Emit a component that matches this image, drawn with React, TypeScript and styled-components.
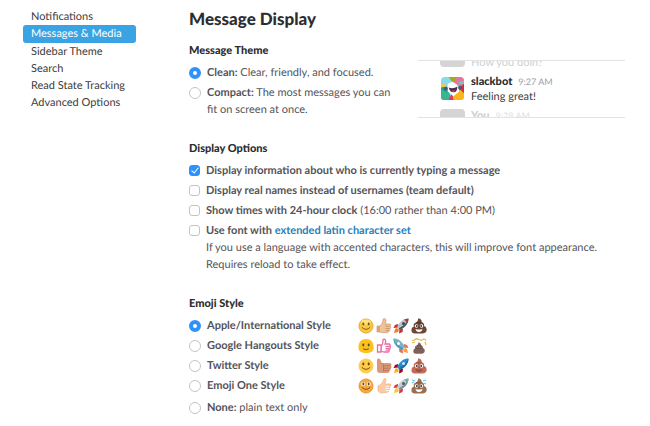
import React, { useState } from "react";
import styled, { createGlobalStyle, css } from "styled-components";

const GlobalStyle = createGlobalStyle`
  *, *::before, *::after { box-sizing: border-box; }
  body {
    margin: 0;
    background: #fff;
    color: #555459;
    font-family: Lato, "Liberation Sans", sans-serif;
    font-size: 11px;
    line-height: 17px;
    text-rendering: geometricPrecision;
  }
`;

const Page = styled.div`
  display: flex;
  align-items: flex-start;
  gap: 53px;
  padding: 8px 25px 0 23px;
`;

const Nav = styled.nav`
  display: flex;
  flex-direction: column;
  flex: 0 0 113px;
`;

const NavLink = styled.a<{ $active?: boolean }>`
  padding: 0 8px;
  border-radius: 3px;
  line-height: ${(p) => (p.$active ? 18 : 17)}px;
  color: ${(p) => (p.$active ? "#fff" : "#3d3c40")};
  background: ${(p) => (p.$active ? "#3aa3e3" : "transparent")};
  text-decoration: none;
`;

const Main = styled.main`
  flex: 1;
  min-width: 0;
`;

const Title = styled.h1`
  margin: 0 0 12px;
  font-size: 17px;
  line-height: 22px;
  font-weight: 900;
  color: #2c2d30;
`;

const Section = styled.section`
  margin-bottom: 22px;
  &:last-child {
    margin-bottom: 0;
  }
`;

const SectionTitle = styled.h2`
  margin: 0 0 5px;
  font-size: 11px;
  line-height: 17px;
  font-weight: 900;
  color: #2c2d30;
`;

const ThemeRow = styled.div`
  display: flex;
  gap: 20px;
`;

const ThemeChoices = styled.div`
  flex: 0 0 209px;
`;

const Options = styled.div`
  display: flex;
  flex-direction: column;
  gap: 3px;
`;

const Option = styled.label`
  display: flex;
  align-items: flex-start;
  gap: 6px;
`;

const control = css`
  appearance: none;
  flex: none;
  margin: 3px 0 0;
  border: 1px solid #c4c4c6;
  background: #fff;
`;

const Radio = styled.input.attrs({ type: "radio" })`
  ${control}
  width: 12px;
  height: 12px;
  border-radius: 50%;
  &:checked {
    border: 4px solid #2f91fb;
  }
`;

const Checkbox = styled.input.attrs({ type: "checkbox" })`
  ${control}
  display: grid;
  place-items: center;
  width: 11px;
  height: 11px;
  border-radius: 3px;
  &:checked {
    border-color: #2f91fb;
    background: #2f91fb;
  }
  &:checked::before {
    content: "";
    width: 4px;
    height: 7px;
    margin-bottom: 2px;
    border: solid #fff;
    border-width: 0 1px 1px 0;
    transform: rotate(40deg);
  }
`;

const Label = styled.span`
  min-width: 0;
`;

const Link = styled.a`
  color: #2a80b9;
  text-decoration: none;
`;

const PreviewColumn = styled.div`
  display: flex;
  flex: 1;
  min-width: 0;
  padding-top: 18px;
`;

const Preview = styled.div`
  flex: 1;
  min-width: 0;
  height: 58px;
  display: flex;
  flex-direction: column;
  justify-content: center;
  gap: 3px;
  overflow: hidden;
  border: solid #e3e3e4;
  border-width: 1px 0;
`;

const Message = styled.div<{ $faded?: boolean }>`
  display: flex;
  gap: 6px;
  flex: none;
  height: 31px;
  padding: 0 22px;
  line-height: 15px;
  color: ${(p) => (p.$faded ? "#cfcfd0" : "#3d3c40")};
`;

const MessageText = styled.div`
  white-space: nowrap;
`;

const Author = styled.strong<{ $faded?: boolean }>`
  font-weight: 900;
  color: ${(p) => (p.$faded ? "#cfcfd0" : "#2c2d30")};
`;

const Time = styled.time<{ $faded?: boolean }>`
  margin-left: 6px;
  font-size: 9px;
  color: ${(p) => (p.$faded ? "#e0e0e1" : "#9e9ea6")};
`;

const BlankAvatar = styled.span`
  width: 25px;
  height: 26px;
  margin-top: 1px;
  border-radius: 4px;
  background: #d5d5d6;
`;

const BotAvatar = styled.svg`
  width: 25px;
  height: 25px;
  padding: 1px;
  margin-top: 2px;
`;

const EmojiRow = styled.div<{ $spaced?: boolean }>`
  display: grid;
  grid-template-columns: 169px 70px;
  align-items: center;
  margin-top: ${(p) => (p.$spaced ? 2 : 0)}px;
`;

const EmojiSet = styled.div`
  display: grid;
  grid-template-columns: repeat(4, 1fr);
  svg {
    width: 16px;
    height: 16px;
    display: block;
  }
`;

function Slackbot() {
  return (
    <BotAvatar viewBox="0 0 24 24" aria-label="slackbot">
      <clipPath id="bot"><rect width="24" height="24" rx="4" /></clipPath>
      <g clipPath="url(#bot)">
        <path fill="#86dce8" d="M0 0h24v24H0z" />
        <path fill="#a2ad18" d="M8 0h9l-4 7z" />
        <path fill="#e6759d" d="M17 0h7v10l-8-1-3-3z" />
        <path fill="#d62a51" d="M18 12l6-5v12z" />
        <path fill="#16a58b" d="M0 8l9 6-2 10H0z" />
        <path fill="#39b592" d="M0 24V13l9 4 1 7z" />
        <path fill="#e93468" d="M8 24l3-7 5 4-1 3z" />
        <path fill="#fbb51a" d="M12 19l8-6 4 4v7H13z" />
        <path fill="#fff" d="M7 7l5-2 5 3 2 7-6 5-6-5z" />
        <path fill="#47304b" d="M8 11c3 1 6 1 9-1 0 4-1 6-4 6s-4-2-5-5z" />
        <path fill="#e0476d" d="M11 14h4l-2 2z" />
        <circle cx="5" cy="12" r="2" fill="#555374" />
        <circle cx="20" cy="11" r="2" fill="#555374" />
        <path fill="#f4c747" d="M0 7l6 1-1 2-5 1z" />
        <path fill="#70c6ba" d="M18 5l6-1v3l-5 1z" />
      </g>
    </BotAvatar>
  );
}

type EmojiStyle = "apple" | "google" | "twitter" | "one";

const faces = {
  apple: { fill: "#fbc940", edge: "#e7a733", ink: "#79501f", y: 6 },
  google: { fill: "#fcc21b", edge: "#fcc21b", ink: "#5b4a35", y: 7 },
  twitter: { fill: "#ffcc4d", edge: "#ffcc4d", ink: "#664500", y: 6 },
  one: { fill: "#f8a93b", edge: "#e99731", ink: "#65462c", y: 6 },
};

function Face({ kind }: { kind: EmojiStyle }) {
  const f = faces[kind];
  return (
    <svg viewBox="0 0 16 16">
      {kind === "google" ? (
        <path fill={f.fill} d="M8 1c5 0 7 3 7.500 7 .5 5-2 7-7.500 7S0 13 .5 8C1 4 3 1 8 1z" />
      ) : (
        <circle cx="8" cy="8" r="7" fill={f.fill} stroke={f.edge} />
      )}
      {kind === "apple" && <ellipse cx="8" cy="4" rx="5" ry="2.500" fill="#ffe477" />}
      {kind === "one" && (
        <g fill="#fff">
          <circle cx="5.200" cy="6" r="2" />
          <circle cx="10.800" cy="6" r="2" />
        </g>
      )}
      <g fill={f.ink}>
        <ellipse cx="5.300" cy={f.y} rx="1" ry="1.400" />
        <ellipse cx="10.700" cy={f.y} rx="1" ry="1.400" />
      </g>
      <path
        d={kind === "google" ? "M5.500 11q2.500 1.500 5 0" : "M4 9.500q4 4 8 0"}
        fill="none" stroke={f.ink} strokeWidth=".9" strokeLinecap="round"
      />
    </svg>
  );
}

function Thumb({ kind }: { kind: EmojiStyle }) {
  if (kind === "google")
    return (
      <svg viewBox="0 0 16 16" fill="#fff" stroke="#ed6ca5" strokeWidth="1.300">
        <path d="M5 8c2-1 2-3 2-6 0-1 2-1 2.500 0 .5 1.500 0 3-.5 4h4c1.500 0 1.500 2 .3 2 1.500.3 1.500 2 0 2 1 .5.8 2-.4 2 .6 1 0 2-1 2H8c-1 0-2-.5-3-1z" />
        <path d="M1.500 7H5v7H1.500zM9.500 8.300h4M9.500 10.300h3.500M9.500 12.200h3" />
      </svg>
    );
  if (kind === "twitter")
    return (
      <svg viewBox="0 0 16 16">
        <path fill="#d99a7c" d="M1 2c0-2 3-2 3.500 0L6 5h7.500c2 0 2.500 2 1.500 2.700 1 1 .5 2.300-.5 2.600.5 1.200 0 2.200-1 2.200 0 1.800-1 2.500-2 2.500H4c-2 0-3-1-3-3z" />
        <path fill="none" stroke="#b96c54" strokeWidth=".8" d="M7.500 7.700h7M7.500 10.200h7M7.500 12.600h6M6 5l1.500 2v6.500" />
      </svg>
    );
  const one = kind === "one";
  return (
    <svg viewBox="0 0 16 16">
      <path
        fill={one ? "#fbcba3" : "#edc39a"} stroke={one ? "#eeb184" : "#c99668"} strokeWidth=".7"
        d={one
          ? "M2 8c3-1 5-4 6-7 1-1 2 0 2 1 0 2-1 3-1.500 4H14c1.500 0 1.500 2 0 2h-1c1.500.5 1.500 2 0 2.200 1 .6.5 2-.7 2 .5 1 0 2-1 2L6 15c-2 0-4-1-4-3z"
          : "M1 8h3c2-2 3-4 3-6 0-2 3-2 3 1 0 1-.5 2-1 3h4.500c1.500 0 1.500 2 .5 2.300 1 .6 1 2-.2 2.300.6 1 .2 2-.8 2 .2 1-.5 2-1.500 2H6L4 14H1z"}
      />
      <path fill="none" stroke={one ? "#fff" : "#c18c60"} strokeWidth=".8" d="M9.500 8.300h4M9.500 10.500h4M9.500 12.600H13" />
      {!one && <path fill="#d6a577" d="M1 8h3v6H1z" />}
    </svg>
  );
}

const rockets = {
  apple: { body: "#b9c0c6", shade: "#4c5560", fin: "#c92d2e", window: "#384957", flame: "#f47b31" },
  google: { body: "#74b5cc", shade: "#4e9bb7", fin: "#e96a55", window: "#fff", flame: "#ff9d3b" },
  twitter: { body: "#2e8ad0", shade: "#1c6bae", fin: "#a0041e", window: "#cbe8fa", flame: "#ffac33" },
  one: { body: "#c3ccd2", shade: "#7d8a94", fin: "#d93849", window: "#4a606d", flame: "#ffc13b" },
};

function Rocket({ kind }: { kind: EmojiStyle }) {
  const r = rockets[kind];
  return (
    <svg viewBox="0 0 16 16">
      <g transform={kind === "google" ? "matrix(-1 0 0 1 16 0)" : undefined}>
        <path fill={r.flame} d="M1 15l1-4 2-1 2 2-1 2z" />
        <path fill={r.fin} d="M5 6L2 7 .5 10 5 9.500zM10 11l-.5 3L6 15.500 6.500 11z" />
        <path fill={r.body} d="M15.500.5C11 .5 7 3 4 9l3 3c6-3 8.500-7 8.500-11.500z" />
        <path fill={r.shade} d="M15.500.5C14 5 10 8 5.500 10.500L7 12c6-3 8.500-7 8.500-11.500z" />
        {kind === "apple" && <path fill={r.fin} d="M15.500.5l-4.500 1 3.500 3.500z" />}
        {kind === "one" && <path fill="#67b98b" d="M15.500.5l-4.500 1 3.500 3.500z" />}
        <circle cx="10.500" cy="5.500" r="1.500" fill={r.window} />
      </g>
    </svg>
  );
}

const piles = {
  apple: { fill: "#6d4634", shade: "#4b2b20" },
  google: { fill: "#80605a", shade: "#5d4540" },
  twitter: { fill: "#be6c59", shade: "#994b3e" },
  one: { fill: "#997052", shade: "#76513a" },
};

function Pile({ kind }: { kind: EmojiStyle }) {
  const p = piles[kind];
  const google = kind === "google";
  return (
    <svg viewBox="0 0 16 16">
      <g transform={google ? "translate(2 4) scale(.75)" : undefined}>
        <path fill={p.fill} d="M7 .5c3 0 4 2 3.500 3.500C13 4.500 13.500 6.500 13 8c2.500.5 3 3 2.500 5-.5 1.500-2 2.500-4 2.500H4c-2.500 0-4-1.500-3.500-4C.8 9.500 1.500 9 3 8.500 2 6.500 3 5 5 4.500 6 4 7.500 2 7 .5z" />
        <path fill="none" stroke={p.shade} strokeWidth=".8" d="M5 4.500q3 1 5.500-.5M3 8.500q5 1.500 10-.5" />
      </g>
      {google ? (
        <path fill="none" stroke="#efb84b" strokeWidth="1.300" d="M1 2q2 1 3-.5t4 0 4 0 3 1M1 5l3-1M14 4l1 3" />
      ) : (
        <g>
          <circle cx="5.500" cy="8" r="1.800" fill="#fff" />
          <circle cx="10.500" cy="8" r="1.800" fill="#fff" />
          <circle cx="5.800" cy="8" r=".9" fill="#33251f" />
          <circle cx="10.200" cy="8" r=".9" fill="#33251f" />
          <path fill={kind === "twitter" ? p.shade : "#fff"} d="M4.500 11q3.500 1 7 0-.5 3-3.500 3t-3.500-3z" />
        </g>
      )}
      {kind === "one" && <path stroke="#6fc7e9" strokeWidth="1.200" d="M1 5l2-1M1 2l3 1M12 3l3-1M13 5l2 1" />}
    </svg>
  );
}

const navItems = ["Notifications", "Messages & Media", "Sidebar Theme", "Search", "Read State Tracking", "Advanced Options"];

const emojiOptions: { kind: EmojiStyle; label: string }[] = [
  { kind: "apple", label: "Apple/International Style" },
  { kind: "google", label: "Google Hangouts Style" },
  { kind: "twitter", label: "Twitter Style" },
  { kind: "one", label: "Emoji One Style" },
];

export default function App() {
  const [theme, setTheme] = useState("clean");
  const [emoji, setEmoji] = useState("apple");

  return (
    <>
      <GlobalStyle />
      <Page>
        <Nav>
          {navItems.map((item, i) => (
            <NavLink key={item} href="#" $active={i === 1}>{item}</NavLink>
          ))}
        </Nav>
        <Main>
          <Title>Message Display</Title>
          <Section>
            <ThemeRow>
              <ThemeChoices>
                <SectionTitle>Message Theme</SectionTitle>
                <Options>
                  <Option>
                    <Radio name="theme" checked={theme === "clean"} onChange={() => setTheme("clean")} />
                    <Label><b>Clean:</b> Clear, friendly, and focused.</Label>
                  </Option>
                  <Option>
                    <Radio name="theme" checked={theme === "compact"} onChange={() => setTheme("compact")} />
                    <Label><b>Compact:</b> The most messages you can fit on screen at once.</Label>
                  </Option>
                </Options>
              </ThemeChoices>
              <PreviewColumn>
                <Preview>
                  <Message $faded>
                    <BlankAvatar />
                    <MessageText><br />How you doin?</MessageText>
                  </Message>
                  <Message>
                    <Slackbot />
                    <MessageText><Author>slackbot</Author><Time>9:27 AM</Time><br />Feeling great!</MessageText>
                  </Message>
                  <Message $faded>
                    <BlankAvatar />
                    <MessageText><Author $faded>You</Author><Time $faded>9:28 AM</Time></MessageText>
                  </Message>
                </Preview>
              </PreviewColumn>
            </ThemeRow>
          </Section>
          <Section>
            <SectionTitle>Display Options</SectionTitle>
            <Options>
              <Option>
                <Checkbox defaultChecked />
                <Label><b>Display information about who is currently typing a message</b></Label>
              </Option>
              <Option>
                <Checkbox />
                <Label><b>Display real names instead of usernames (team default)</b></Label>
              </Option>
              <Option>
                <Checkbox />
                <Label><b>Show times with 24-hour clock</b> (16:00 rather than 4:00 PM)</Label>
              </Option>
              <Option>
                <Checkbox />
                <Label>
                  <b>Use font with <Link href="#">extended latin character set</Link></b><br />
                  If you use a language with accented characters, this will improve font appearance.<br />
                  Requires reload to take effect.
                </Label>
              </Option>
            </Options>
          </Section>
          <Section>
            <SectionTitle>Emoji Style</SectionTitle>
            <Options>
              {emojiOptions.map(({ kind, label }) => (
                <EmojiRow key={kind}>
                  <Option>
                    <Radio name="emoji" checked={emoji === kind} onChange={() => setEmoji(kind)} />
                    <Label><b>{label}</b></Label>
                  </Option>
                  <EmojiSet>
                    <Face kind={kind} />
                    <Thumb kind={kind} />
                    <Rocket kind={kind} />
                    <Pile kind={kind} />
                  </EmojiSet>
                </EmojiRow>
              ))}
              <EmojiRow $spaced>
                <Option>
                  <Radio name="emoji" checked={emoji === "none"} onChange={() => setEmoji("none")} />
                  <Label><b>None:</b> plain text only</Label>
                </Option>
              </EmojiRow>
            </Options>
          </Section>
        </Main>
      </Page>
    </>
  );
}
